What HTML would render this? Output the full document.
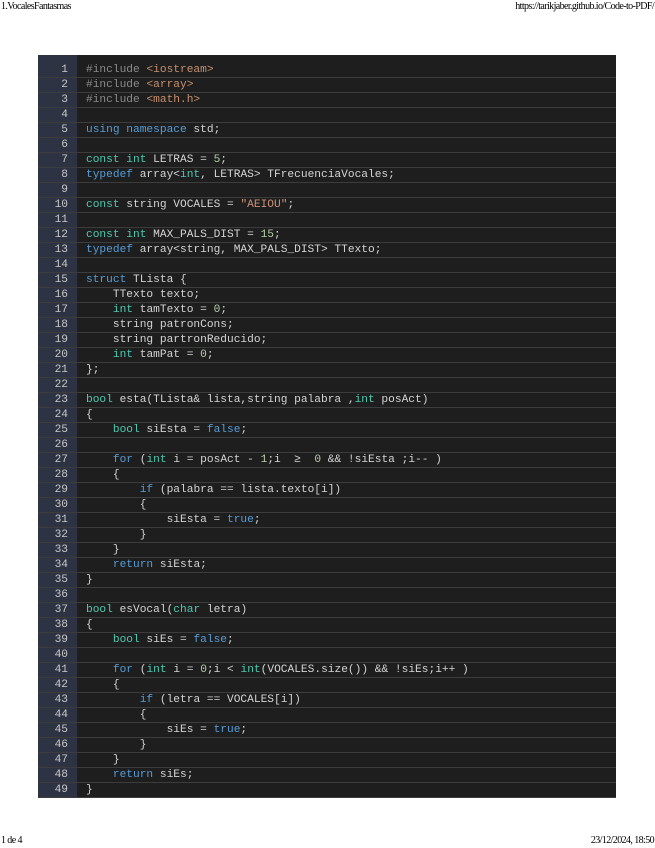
<html><head><style>
body{margin:0;width:655px;height:848px;background:#fff;position:relative;font-family:"Liberation Serif",serif;}
.h{position:absolute;font-size:10px;color:#000;letter-spacing:-0.6px}
#box{position:absolute;left:38px;top:55px;width:578px;height:742px;background:#1e1e1e;}
#gut{position:absolute;left:0;top:0;width:39px;height:742px;background:#2d3343;}
.r{position:absolute;left:0;width:578px;height:15px;border-bottom:1px solid #3c3c3c;box-sizing:border-box;font-family:"Liberation Mono",monospace;font-size:11.2px;line-height:14px;color:#d4d4d4;white-space:pre}
.n{position:absolute;left:0;width:30px;text-align:right;color:#c8c8c8}
.c{position:absolute;left:48px}
.p{color:#8a8a8a}.i{color:#c8906e}.k{color:#569cd6}.t{color:#4ec9b0}.s{color:#ce9178}.m{color:#b5cea8}
</style></head><body>
<div class="h" style="left:1px;top:1px">1.VocalesFantasmas</div>
<div class="h" style="right:1px;top:1px">https://tarikjaber.github.io/Code-to-PDF/</div>
<div class="h" style="left:1px;top:835px">1 de 4</div>
<div class="h" style="right:1px;top:835px">23/12/2024, 18:50</div>
<div id="box"><div id="gut"></div>
<div id="rows"></div>
</div>
<script>
var L=[
'<span class="p">#include </span><span class="i">&lt;iostream&gt;</span>',
'<span class="p">#include </span><span class="i">&lt;array&gt;</span>',
'<span class="p">#include </span><span class="i">&lt;math.h&gt;</span>',
'',
'<span class="k">using namespace</span> std;',
'',
'<span class="t">const int</span> LETRAS = <span class="m">5</span>;',
'<span class="k">typedef</span> array&lt;<span class="t">int</span>, LETRAS&gt; TFrecuenciaVocales;',
'',
'<span class="t">const</span> string VOCALES = <span class="s">"AEIOU"</span>;',
'',
'<span class="t">const int</span> MAX_PALS_DIST = <span class="m">15</span>;',
'<span class="k">typedef</span> array&lt;string, MAX_PALS_DIST&gt; TTexto;',
'',
'<span class="k">struct</span> TLista {',
'    TTexto texto;',
'    <span class="t">int</span> tamTexto = <span class="m">0</span>;',
'    string patronCons;',
'    string partronReducido;',
'    <span class="t">int</span> tamPat = <span class="m">0</span>;',
'};',
'',
'<span class="t">bool</span> esta(TLista&amp; lista,string palabra ,<span class="t">int</span> posAct)',
'{',
'    <span class="t">bool</span> siEsta = <span class="k">false</span>;',
'',
'    <span class="k">for</span> (<span class="t">int</span> i = posAct - <span class="m">1</span>;i  ≥  <span class="m">0</span> &amp;&amp; !siEsta ;i-- )',
'    {',
'        <span class="k">if</span> (palabra == lista.texto[i])',
'        {',
'            siEsta = <span class="k">true</span>;',
'        }',
'    }',
'    <span class="k">return</span> siEsta;',
'}',
'',
'<span class="t">bool</span> esVocal(<span class="t">char</span> letra)',
'{',
'    <span class="t">bool</span> siEs = <span class="k">false</span>;',
'',
'    <span class="k">for</span> (<span class="t">int</span> i = <span class="m">0</span>;i &lt; <span class="t">int</span>(VOCALES.size()) &amp;&amp; !siEs;i++ )',
'    {',
'        <span class="k">if</span> (letra == VOCALES[i])',
'        {',
'            siEs = <span class="k">true</span>;',
'        }',
'    }',
'    <span class="k">return</span> siEs;',
'}'];
var h='';for(var j=0;j<L.length;j++){h+='<div class="r" style="top:'+(8+j*15)+'px"><span class="n">'+(j+1)+'</span><span class="c">'+L[j]+'</span></div>';}
document.getElementById('rows').innerHTML=h;
</script>
</body></html>
